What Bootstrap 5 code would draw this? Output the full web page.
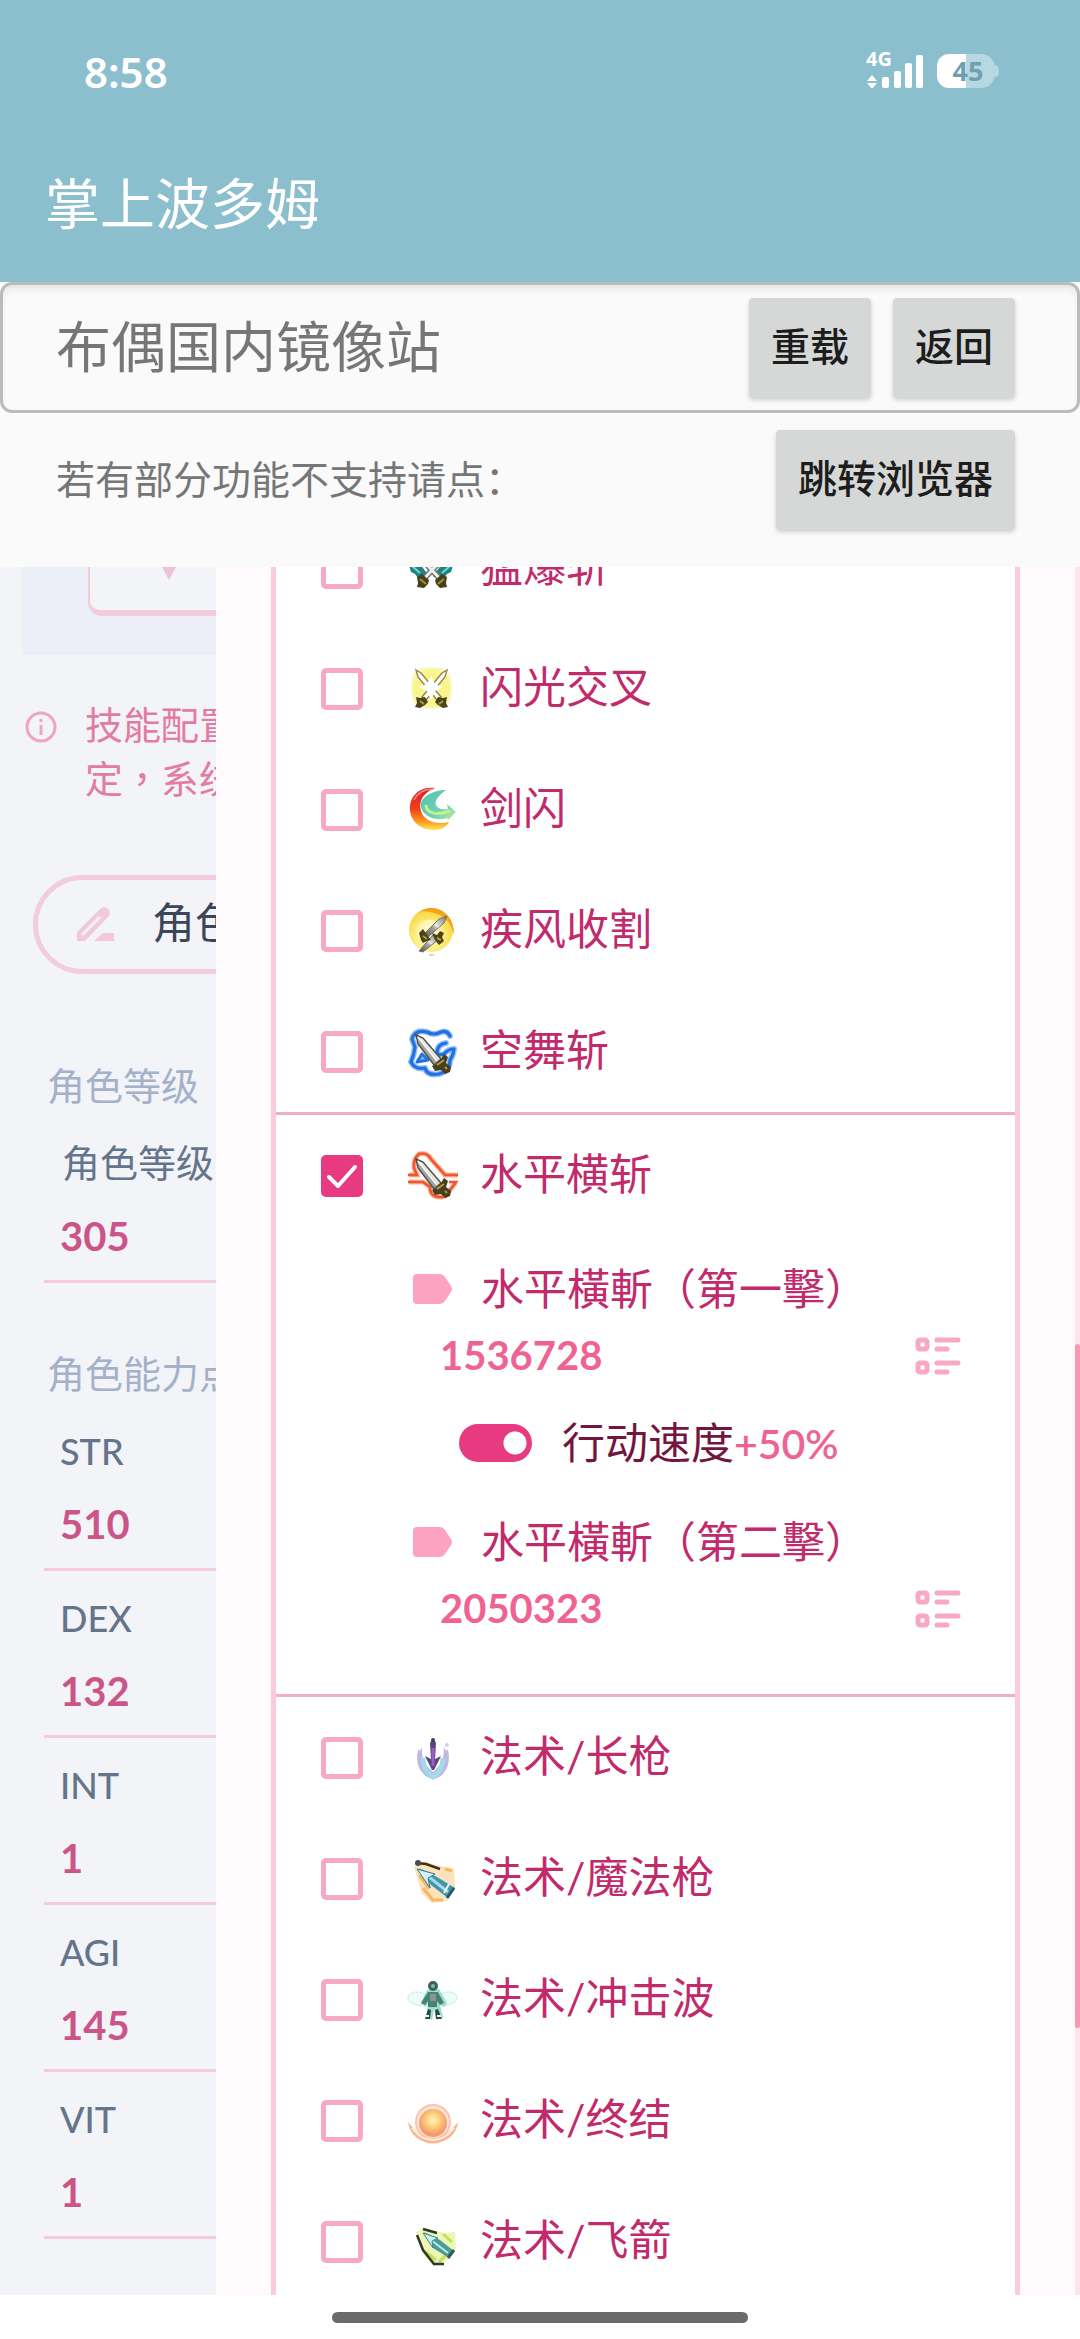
<!DOCTYPE html>
<html lang="zh-CN">
<head>
<meta charset="utf-8">
<meta name="viewport" content="width=device-width, initial-scale=1">
<title>掌上波多姆</title>
<link rel="stylesheet" href="https://cdn.jsdelivr.net/npm/bootstrap@5.3.0/dist/css/bootstrap.min.css">
<style>
  body { font-family: "Noto Sans", "Noto Sans CJK SC", sans-serif; background: #fff; }
  .app-screen { height: 100vh; overflow: hidden; }
  .app-head { background: #8cbfce; color: #fff; }
  .status-row { padding: 42px 80px 0 84px; height: 102px; font-size: 42px; font-weight: 600; line-height: 60px; }
  .app-title { font-size: 55px; font-weight: 400; line-height: 80px; padding: 61px 45px 39px; margin: 0; }
  .site-bar { border: 3px solid #b9bcbb; border-radius: 12px; padding: 13px 62px 13px 53px; background: #fafafa; box-shadow: inset 0 6px 8px -4px #dcdcd8; font-size: 55px; line-height: 76px; color: #767676; }
  .site-bar > span { padding-bottom: 4px; }
  .hint-bar { padding: 17px 65px 38px 56px; font-size: 39px; color: #767676; }
  .tools { background: #fafafa; }
  .tool-btn { height: 99px; padding: 0 22px 4px; font-size: 39px; font-weight: 500; line-height: 56px; color: #1c1d1c; background: #d6d8d7; border: 0; border-radius: 4px; box-shadow: 0 3px 5px rgba(0,0,0,.18); }
  .tool-gap { gap: 22px; }

  .game-area { font-family: Lato, "Noto Sans CJK TC", sans-serif; min-height: 0; }
  .side-pane { width: 20%; background: #f3f4f8; }
  .side-body { width: 640px; }
  .chart-box { height: 88px; margin-left: 22px; padding-left: 66px; background: #eceff8; }
  .chart-card { height: 49px; border: solid #f3cbdb; border-width: 0 0 6px 2px; border-bottom-left-radius: 14px; background: #f3f4f8; padding-left: 69px; }
  .note { padding: 42px 0 0 25px; gap: 27px; font-size: 38px; line-height: 54px; color: #e27ca2; }
  .note svg { margin-top: 14px; }
  .role-btn { margin: 70px 0 0 33px; width: 500px; height: 99px; border: 5px solid #f2cddd; border-radius: 50px; background: transparent; padding: 0 38px 2px; gap: 36px; font-size: 43px; color: #3b4759; }
  .stat-group { padding-left: 44px; }
  .stat-title { margin: 0 0 4px 3px; font-size: 38px; line-height: 54px; font-weight: 400; color: #a3b2c9; }
  .stat-item { height: 167px; padding: 11px 0 0 16px; border-bottom: 3px solid #f4cbd9; }
  .stat-item label { display: block; font-size: 36px; line-height: 72px; color: #64748b; font-weight: 500; }
  .stat-item label.cjk-label { font-size: 38px; font-weight: 400; line-height: 70px; padding: 0 0 2px 2px; }
  .stat-item input { display: block; width: 100%; height: 74px; padding: 0; border: 0; background: transparent; font-size: 40px; font-weight: 700; color: #cb5488; }
  .first-stats { padding-top: 84px; }
  .next-stats { padding-top: 63px; }

  .drawer-pane { background: #fffbfd; min-width: 0; padding: 0 55px; }
  .skill-list { border: solid #f9cbdb; border-width: 0 5px; background: #fff; color: #c12a6b; font-size: 43px; line-height: 60px; height: 100%; overflow: hidden; }
  .skill-scroll { margin-top: -60px; }
  .skill-group + .skill-group { border-top: 3px solid #f5adc4; }
  .skill-row { height: 121px; padding-left: 45px; }
  .skill-row .form-check-input { width: 42px; height: 42px; margin: 0 46px 0 0; border: 5px solid #f9a8c4; border-radius: 5px; background-color: #fff; }
  .skill-row .form-check-input:checked { border-color: #e83a80; background-color: #e83a80; background-size: 40px 40px; background-image: url("data:image/svg+xml,%3csvg xmlns='http://www.w3.org/2000/svg' viewBox='0 0 40 40'%3e%3cpath fill='none' stroke='%23fff' stroke-width='4' stroke-linecap='round' stroke-linejoin='round' d='M7 21l9 9L33 11'/%3e%3c/svg%3e"); }
  .skill-row label { gap: 23px; }
  .skill-row label span { padding-bottom: 3px; }
  .skill-row svg { width: 48px; height: 48px; overflow: visible; }
  .skill-detail { padding: 19px 54px 52px 137px; line-height: 67px; }
  .hit-title { gap: 29px; }
  .hit-value { padding-left: 27px; font-size: 40px; font-weight: 700; color: #ef6394; }
  .icon-btn { border: 0; padding: 0; background: transparent; line-height: 0; }
  .buff-row { height: 107px; margin: 0 0 12px 46px; padding: 0; gap: 30px; }
  .buff-row .form-check-input { width: 73px; height: 38px; margin: 0; border: 0; background-color: #e83a80; background-size: 46px 46px; background-image: radial-gradient(circle, #fff 11px, transparent 12px); background-position: 33px -4px; }
  .buff-row .form-check-input:checked { background-color: #e83a80; background-image: radial-gradient(circle, #fff 11px, transparent 12px); background-position: 33px -4px; }
  .buff-row label { color: #73163f; }
  .buff-plus { font-size: 41px; font-weight: 600; color: #ef6394; }
  .scroll-track { width: 5px; padding-top: 777px; background: #ffe4ed; }
  .scroll-thumb { height: 684px; background: #fd95b5; border-radius: 3px; }
  .home-zone { height: 44px; background: #fff; }
  .home-pill { width: 38.6%; height: 11px; border-radius: 6px; background: #6a6a6a; }
</style>
<script src="https://cdn.jsdelivr.net/npm/bootstrap@5.3.0/dist/js/bootstrap.bundle.min.js"></script>
</head>
<body>
<svg width="0" height="0" class="position-absolute" aria-hidden="true">
  <defs>
    <linearGradient id="steel" x1="0" y1="1" x2="1" y2="0"><stop offset="0" stop-color="#4e4f49"/><stop offset=".45" stop-color="#a5a6a0"/><stop offset=".55" stop-color="#e9e9e6"/><stop offset="1" stop-color="#6e6e69"/></linearGradient>
    <radialGradient id="yellowGlow"><stop offset="0" stop-color="#fff"/><stop offset=".45" stop-color="#faf48c"/><stop offset=".8" stop-color="#fbf7a6"/><stop offset="1" stop-color="#fffde0" stop-opacity="0"/></radialGradient>
    <linearGradient id="fire" x1="0.6" y1="0" x2="0.6" y2="1"><stop offset="0" stop-color="#d41f2e"/><stop offset=".5" stop-color="#f0401c"/><stop offset=".8" stop-color="#ff9a1e"/><stop offset="1" stop-color="#fbe95a"/></linearGradient>
    <linearGradient id="aqua" x1="0" y1="0" x2="1" y2="1"><stop offset="0" stop-color="#4fc4ae"/><stop offset=".6" stop-color="#6fd0b8"/><stop offset="1" stop-color="#c8ec90"/></linearGradient>
    <radialGradient id="sun" cx=".45" cy=".65" r=".7"><stop offset="0" stop-color="#fffbd0"/><stop offset=".45" stop-color="#fbf080"/><stop offset=".8" stop-color="#f9d848"/><stop offset="1" stop-color="#f5a020"/></radialGradient>
    <radialGradient id="orb" cx=".5" cy=".4"><stop offset="0" stop-color="#fff4c0"/><stop offset=".5" stop-color="#fbd078"/><stop offset="1" stop-color="#f59a70"/></radialGradient>
    <g id="sword">
      <path d="M7 7l7 3 18 21-7 6L9 16z" fill="url(#steel)" stroke="#4d4d47" stroke-width="1.4"/>
      <path d="M9 9l19 24" stroke="#fff" stroke-width="1.4"/>
      <path d="M23 38l4-2 5-5 3-5 4 3-2 6 5 4-1 5-5 2-4-4-6 1z" fill="#463f20"/>
      <path d="M28 37l7-5M36 39l2 2" stroke="#b39a3a" stroke-width="2"/>
    </g>
  </defs>
</svg>

<div class="app-screen d-flex flex-column">
  <header class="app-head">
    <div class="status-row d-flex justify-content-between">
      <span>8:58</span>
      <svg width="134" height="42" viewBox="0 0 134 42" class="mt-1" aria-label="4G 45%">
        <g fill="#fff">
          <text x="0" y="20" font-size="20" font-weight="700" font-family="Noto Sans">4G</text>
          <path d="M6 29l5 6H1zM6 43l5-6H1z"/>
          <rect x="16" y="31" width="7" height="11" rx="2"/><rect x="28" y="25" width="7" height="17" rx="2"/><rect x="39" y="17" width="7" height="25" rx="2"/><rect x="50" y="9" width="7" height="33" rx="2"/>
        </g>
        <path d="M82 8h33a14 14 0 0 1 14 14v6a14 14 0 0 1-14 14H82z" fill="#b6d8e1"/>
        <path d="M129 19q4 0 4 6t-4 6z" fill="#b6d8e1"/>
        <path d="M100 8H83a12 12 0 0 0-12 12v10a12 12 0 0 0 12 12h17z" fill="#fff"/>
        <text x="102" y="35" text-anchor="middle" font-size="27" font-weight="700" font-family="Noto Sans" fill="#6fa0af">45</text>
      </svg>
    </div>
    <h1 class="app-title">掌上波多姆</h1>
  </header>

  <section class="tools">
    <div class="site-bar d-flex align-items-center justify-content-between">
      <span>布偶国内镜像站</span>
      <div class="d-flex tool-gap">
        <button type="button" class="tool-btn">重载</button>
        <button type="button" class="tool-btn">返回</button>
      </div>
    </div>
    <div class="hint-bar d-flex align-items-center justify-content-between">
      <span>若有部分功能不支持请点：</span>
      <button type="button" class="tool-btn">跳转浏览器</button>
    </div>
  </section>

  <main class="game-area d-flex flex-grow-1 overflow-hidden">
    <aside class="side-pane overflow-hidden flex-shrink-0">
      <div class="side-body">
        <div class="chart-box">
          <div class="chart-card"><svg class="d-block" width="20" height="14" aria-hidden="true"><path d="M3 0h14l-7 13z" fill="#efc3d6"/></svg></div>
        </div>
        <div class="note d-flex align-items-start">
          <svg width="33" height="33" viewBox="0 0 33 33" fill="none" stroke="#eda6c0" stroke-width="3" aria-hidden="true"><circle cx="16" cy="16" r="14"/><path d="M16 14v10M16 8v3"/></svg>
          <div lang="zh-TW">技能配置<br>定，系统</div>
        </div>
        <button type="button" class="role-btn d-flex align-items-center">
          <svg width="40" height="36" viewBox="0 0 40 36" aria-hidden="true"><path d="M1 35v-9L24 3q4-4 8 0t0 8L9 35z" fill="#f2c9db"/><path d="M6 29L24 11" stroke="#f3f4f8" stroke-width="3"/><path d="M18 35l9-8h11v8z" fill="#f2c9db"/></svg>
          <span class="text-nowrap">角色</span>
        </button>
        <section class="stat-group first-stats">
          <h2 class="stat-title">角色等级</h2>
          <div class="stat-item"><label class="cjk-label" for="lv">角色等级</label><input id="lv" type="text" value="305"></div>
        </section>
        <section class="stat-group next-stats">
          <h2 class="stat-title">角色能力点</h2>
          <div class="stat-item"><label for="str">STR</label><input id="str" type="text" value="510"></div>
          <div class="stat-item"><label for="dex">DEX</label><input id="dex" type="text" value="132"></div>
          <div class="stat-item"><label for="int">INT</label><input id="int" type="text" value="1"></div>
          <div class="stat-item"><label for="agi">AGI</label><input id="agi" type="text" value="145"></div>
          <div class="stat-item"><label for="vit">VIT</label><input id="vit" type="text" value="1"></div>
        </section>
      </div>
    </aside>

    <section class="drawer-pane flex-grow-1">
      <div class="skill-list">
        <div class="skill-scroll">
          <div class="skill-group">
            <div class="skill-row d-flex align-items-center">
              <input class="form-check-input" type="checkbox" id="s1">
              <label for="s1" class="d-flex align-items-center">
                <svg viewBox="0 0 48 48"><path d="M-1 18l12 2 9 12-8 6-6-8-4-2zM45 18l-12 2-9 12 8 6 6-8 4-2z" fill="#1d8385"/><path d="M3 22l8 7M41 22l-8 7" stroke="#7fd0c8" stroke-width="2"/><path d="M36 12L13 37M10 12l23 25" stroke="#70736d" stroke-width="6"/><path d="M36 12L14 36M10 12l22 24" stroke="#eef0ed" stroke-width="3"/><path d="M8 33l5-3 7 6-1 4-4 4-7-1 1-4zM38 33l-5-3-7 6 1 4 4 4 7-1-1-4z" fill="#463f20"/><path d="M11 35l6 5M35 35l-6 5" stroke="#a98e38" stroke-width="2"/></svg>
                <span>猛爆斩</span></label>
            </div>
            <div class="skill-row d-flex align-items-center">
              <input class="form-check-input" type="checkbox" id="s2">
              <label for="s2" class="d-flex align-items-center">
                <svg viewBox="0 0 48 48"><rect x="0" y="0" width="45" height="46" rx="14" fill="url(#yellowGlow)"/><rect x="3" y="3" width="39" height="40" rx="12" fill="#faf484" opacity=".5"/><path d="M7 5l5 3 20 24-4 3L9 12zM38 5l-5 3-20 24 4 3 19-23z" fill="#fffef0" stroke="#8b865a" stroke-width="1.4"/><path d="M22 11l4 8 8 3-8 4-4 9-4-9-8-4 8-3z" fill="#fff"/><path d="M7 32l4 1 5-1 3 5-3 3-5 3-5-1 2-4zM38 32l-4 1-5-1-3 5 3 3 5 3 5-1-2-4z" fill="#4b441c"/><path d="M11 36l4 3M34 36l-4 3" stroke="#ad9a3a" stroke-width="2"/></svg>
                <span>闪光交叉</span></label>
            </div>
            <div class="skill-row d-flex align-items-center">
              <input class="form-check-input" type="checkbox" id="s3">
              <label for="s3" class="d-flex align-items-center">
                <svg viewBox="0 0 48 48"><path d="M26 2C9 0 0 12 1 24c1 13 13 21 26 20 7-1 11-4 13-8-13 3-25-1-28-11C9 15 15 6 26 2z" fill="url(#fire)"/><path d="M5 14C9 6 16 3 24 3" stroke="#ff8b80" stroke-width="1.5" fill="none"/><path d="M37 4C23 4 10 12 12 21c2 9 14 15 27 11l-1 3 9-9-9-8 1 5c-8 1-10-1-12-4-2-4 3-10 10-15z" fill="url(#aqua)"/><path d="M17 19c0 8 10 11 24 6" stroke="#c5f08a" stroke-width="3" fill="none"/></svg>
                <span>剑闪</span></label>
            </div>
            <div class="skill-row d-flex align-items-center">
              <input class="form-check-input" type="checkbox" id="s4">
              <label for="s4" class="d-flex align-items-center">
                <svg viewBox="0 0 48 48"><circle cx="22" cy="23" r="22" fill="url(#sun)"/><path d="M12 4C28-5 46 8 45 28 42 14 34 5 12 4z" fill="#f5a31c"/><circle cx="20" cy="25" r="12" fill="#fff8c4" opacity=".8"/><path d="M38 9l-3 7-17 15-3-4L30 12z" fill="url(#steel)" stroke="#75736a"/><path d="M30 32l-16 13-4-1 14-16z" fill="url(#steel)" stroke="#75736a"/><path d="M10 26l4-4 4 6 4 5-4 1-4 2-2-3zM23 26l5 2 3-4 4 2-2 4 2 4-5 4-4-5z" fill="#4b421b"/><path d="M14 29l4 3M28 31l4 2" stroke="#b5993a" stroke-width="2"/><path d="M20 48h5" stroke="#c7a0a0"/></svg>
                <span>疾风收割</span></label>
            </div>
            <div class="skill-row d-flex align-items-center">
              <input class="form-check-input" type="checkbox" id="s5">
              <label for="s5" class="d-flex align-items-center">
                <svg viewBox="0 0 48 48" fill="none"><g stroke-linejoin="round" stroke-linecap="round"><path d="M41 8q-3-6-9-4-7 4-14 0Q6 1 3 11l3 8q-1 8-4 15 4 8 14 6 2 8 14 6 11-3 11-14 3-4 4-11-6 0-10 5-6 2-7-2 1-8 9-9" stroke="#8fc0f8" stroke-width="6"/><path d="M41 8q-3-6-9-4-7 4-14 0Q6 1 3 11l3 8q-1 8-4 15 4 8 14 6 2 8 14 6 11-3 11-14 3-4 4-11-6 0-10 5-6 2-7-2 1-8 9-9" stroke="#2470df" stroke-width="3.2"/><path d="M13 26l-5 8 11-2z" fill="#8fc0f8" stroke="#2470df" stroke-width="3"/></g><use href="#sword"/></svg>
                <span>空舞斩</span></label>
            </div>
          </div>

          <div class="skill-group">
            <div class="skill-row d-flex align-items-center">
              <input class="form-check-input" type="checkbox" id="s6" checked>
              <label for="s6" class="d-flex align-items-center">
                <svg viewBox="0 0 48 48" fill="none"><g stroke="#fbb49a" stroke-width="5"><path d="M0 23h8L5 16Q4 7 10 2q8-2 12 5l14 16h13M0 30h14l7 5q0 11 12 10 6-1 8-7l6-8"/></g><g stroke="#f0562b" stroke-width="2.6"><path d="M-1 23h9L5 16Q4 7 10 2q8-2 12 5l14 16h13M-1 30h15l7 5q0 11 12 10 6-1 8-7l6-8h-7"/></g><use href="#sword"/></svg>
                <span>水平横斩</span></label>
            </div>
            <div class="skill-detail">
              <div class="hit-title d-flex align-items-center">
                <svg width="39" height="30" aria-hidden="true"><path d="M4 0h23q3 0 5 3l6 9q2 3 0 6l-6 9q-2 3-5 3H4q-4 0-4-4V4q0-4 4-4z" fill="#fda3c1"/></svg>
                <span>水平橫斬（第一擊）</span>
              </div>
              <div class="hit-value d-flex align-items-center justify-content-between">
                <span>1536728</span>
                <button type="button" class="icon-btn" aria-label="详情"><svg width="46" height="38" fill="none" stroke="#f9a8c4" stroke-width="5" stroke-linecap="round"><rect x="3" y="3" width="9" height="9" rx="2"/><rect x="3" y="26" width="9" height="9" rx="2"/><path d="M22 3h21M22 12h10M22 26h21M22 35h10"/></svg></button>
              </div>
              <div class="buff-row form-switch d-flex align-items-center">
                <input class="form-check-input" type="checkbox" role="switch" id="buff" checked>
                <label for="buff">行动速度<span class="buff-plus">+50%</span></label>
              </div>
              <div class="hit-title d-flex align-items-center">
                <svg width="39" height="30" aria-hidden="true"><path d="M4 0h23q3 0 5 3l6 9q2 3 0 6l-6 9q-2 3-5 3H4q-4 0-4-4V4q0-4 4-4z" fill="#fda3c1"/></svg>
                <span>水平橫斬（第二擊）</span>
              </div>
              <div class="hit-value d-flex align-items-center justify-content-between">
                <span>2050323</span>
                <button type="button" class="icon-btn" aria-label="详情"><svg width="46" height="38" fill="none" stroke="#f9a8c4" stroke-width="5" stroke-linecap="round"><rect x="3" y="3" width="9" height="9" rx="2"/><rect x="3" y="26" width="9" height="9" rx="2"/><path d="M22 3h21M22 12h10M22 26h21M22 35h10"/></svg></button>
              </div>
            </div>
          </div>

          <div class="skill-group">
            <div class="skill-row d-flex align-items-center">
              <input class="form-check-input" type="checkbox" id="s7">
              <label for="s7" class="d-flex align-items-center">
                <svg viewBox="0 0 48 48"><path d="M13 13Q6 24 11 35q5 9 13 10 9-1 13-10 5-11-2-22 0 12-4 18l-7 7-7-7q-5-8-4-18z" fill="#b4bce4"/><path d="M14 24q0 12 10 19 10-7 10-19" fill="none" stroke="#a3d9e8" stroke-width="5"/><path d="M10 16q-3 12 3 21M38 16q3 12-3 21" fill="none" stroke="#cbb5e2" stroke-width="2"/><path d="M24 4l3 5-1 16 6-3-7 14-2 0-7-14 6 3-1-16z" fill="#5b4480"/><path d="M24 14v18" stroke="#a05cc8" stroke-width="3"/><circle cx="38" cy="11" r="2" fill="#dccdf0"/><circle cx="24" cy="6" r="2" fill="#3d4158"/></svg>
                <span>法术/长枪</span></label>
            </div>
            <div class="skill-row d-flex align-items-center">
              <input class="form-check-input" type="checkbox" id="s8">
              <label for="s8" class="d-flex align-items-center">
                <svg viewBox="0 0 48 48"><path d="M5 12l10-6 16 5 14 2 1 20-8 13-15 2-10-9z" fill="#fde3bb"/><path d="M10 20l10 14M36 14l7 2M14 33l10 12h10" stroke="#f5b765" stroke-width="3" fill="none"/><path d="M10 13l18 9 18 11-7 10-17-13z" fill="#3f95ae"/><path d="M20 22l19 15" stroke="#a5dbe6" stroke-width="3"/><path d="M8 14l18 5-7 4 2 10z" fill="#d6f1f6" stroke="#2d7892"/><path d="M40 29l-5 9" stroke="#eaf7f5" stroke-width="2"/><path d="M7 8l10 1 14 5" stroke="#3b3024" stroke-width="2.5" fill="none"/><path d="M45 33l-7 10" stroke="#23596f" stroke-width="3"/><circle cx="9" cy="8" r="3" fill="#4c4c4a"/></svg>
                <span>法术/魔法枪</span></label>
            </div>
            <div class="skill-row d-flex align-items-center">
              <input class="form-check-input" type="checkbox" id="s9">
              <label for="s9" class="d-flex align-items-center">
                <svg viewBox="0 0 48 48"><g fill="#eefcf8" stroke="#c4f0e3"><path d="M16 18Q4 13-1 20q-2 7 13 10zM31 18q12-5 17 2 2 7-13 10z"/></g><path d="M18 14l-6 13 4 4 3-2-2 12 6 3 2-11 3 11 6-3-3-12 4 2 3-4-8-14z" fill="#9be0c9"/><circle cx="24" cy="10" r="5" fill="#3c625c"/><circle cx="24" cy="10" r="2" fill="#8ab8ac"/><path d="M19 16h10l6 11-4 2-3-4v6h-9v-6l-3 4-4-2z" fill="#4a8177"/><path d="M21 18h6v7h-6z" fill="#89958f"/><path d="M19 33l3 1-1 9h-5zM29 33l-3 1 1 9h6z" fill="#284b47"/><path d="M16 40h4M28 40h4" stroke="#eee" stroke-width="2"/></svg>
                <span>法术/冲击波</span></label>
            </div>
            <div class="skill-row d-flex align-items-center">
              <input class="form-check-input" type="checkbox" id="s10">
              <label for="s10" class="d-flex align-items-center">
                <svg viewBox="0 0 48 48"><circle cx="24" cy="25" r="17" fill="#fde3da" stroke="#fbc2b0" stroke-width="2"/><path d="M-1 25q2 15 17 20 8 3 16 0 15-5 17-20-7 9-13 13-12 7-24 0-6-4-13-13z" fill="#fbb391"/><path d="M3 31q9 12 21 12t21-12" fill="none" stroke="#fff0d8" stroke-width="2"/><circle cx="24" cy="26" r="14" fill="url(#orb)"/></svg>
                <span>法术/终结</span></label>
            </div>
            <div class="skill-row d-flex align-items-center">
              <input class="form-check-input" type="checkbox" id="s11">
              <label for="s11" class="d-flex align-items-center">
                <svg viewBox="0 0 48 48"><path d="M7 14l8-4 20 5 11-1 1 16-8 12-15 6-10-12z" fill="#edf6b4"/><path d="M34 16l9 8M30 44l12-12M17 34l10 8" stroke="#c3df5c" stroke-width="3"/><path d="M15 14l16 8 14 11-5 7-16-10z" fill="#4a9c9a"/><path d="M22 22l17 13" stroke="#b8ece8" stroke-width="2"/><path d="M14 15l15 5-6 3 1 7z" fill="#c8f0ee" stroke="#3a8791"/><path d="M8 17l6 15 11 14h10" stroke="#2e372a" stroke-width="2.5" fill="none"/><path d="M14 11l14 4" stroke="#2e372a" stroke-width="2.5"/><path d="M45 32l-6 8" stroke="#2c5b5e" stroke-width="3"/></svg>
                <span>法术/飞箭</span></label>
            </div>
          </div>
        </div>
      </div>
    </section>
    <div class="scroll-track flex-shrink-0"><div class="scroll-thumb"></div></div>
  </main>

  <footer class="home-zone d-flex justify-content-center align-items-center flex-shrink-0"><div class="home-pill"></div></footer>
</div>
</body>
</html>
